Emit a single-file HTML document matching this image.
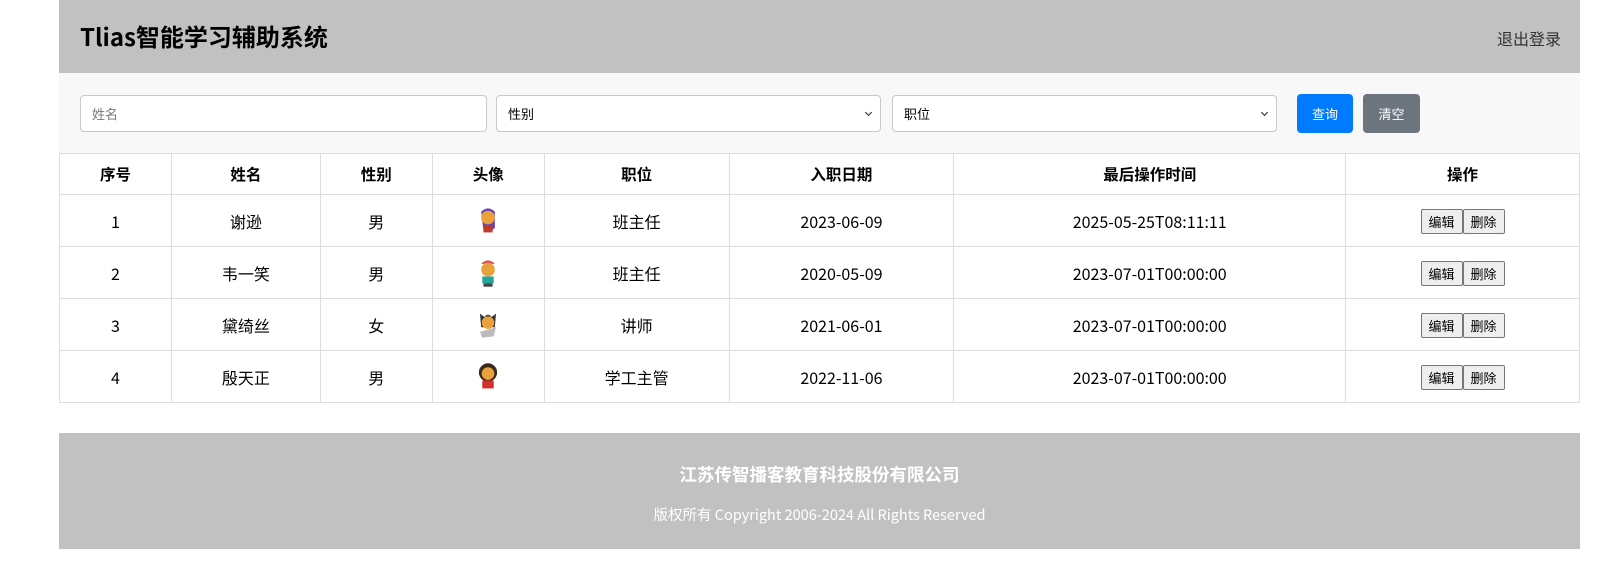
<!DOCTYPE html>
<html><head><meta charset="utf-8"><style>
*{margin:0;padding:0;box-sizing:border-box}
body{width:1620px;height:570px;background:#fff;font-family:"Liberation Sans","Noto Sans CJK SC",sans-serif;color:#000;position:relative;overflow:hidden}
.hdr{position:absolute;left:59px;top:0;width:1521px;height:73px;background:#c2c1c2}
.hdr h1{position:absolute;left:21px;top:20px;font-size:24px;font-weight:bold;font-family:"Noto Sans CJK SC",sans-serif;line-height:32px}
.hdr .out{position:absolute;right:19px;top:26px;font-size:16px;color:#333;font-family:"Noto Sans CJK SC",sans-serif;line-height:24px}
.srch{position:absolute;left:59px;top:73px;width:1521px;height:80px;background:#f8f8f8}
.inp{position:absolute;top:22px;height:37px;background:#fff;border:1px solid #c8c8c8;border-radius:4px;font-size:13px;font-family:"Noto Sans CJK SC",sans-serif;line-height:35px;padding-left:11px}
.inp.ph{color:#777}
.inp .arr{position:absolute;right:9px;top:14px;width:5px;height:5px;border-right:1.5px solid #222;border-bottom:1.5px solid #222;transform:rotate(45deg)}
.btn{position:absolute;top:21px;height:39px;border-radius:4px;color:#fff;font-size:13px;font-family:"Noto Sans CJK SC",sans-serif;text-align:center;line-height:39px}
table{position:absolute;left:59px;top:153px;width:1521px;border-collapse:collapse;font-family:"Noto Sans CJK SC",sans-serif;font-size:16px}
td,th{border:1px solid #ddd;text-align:center;height:52px}
th{height:41px;font-weight:bold;font-size:15.5px}
.ob{display:inline-block;height:25px;width:42px;border:1px solid #777;border-radius:2px;background:#eee;font-size:13px;line-height:23px;vertical-align:middle}
.ft{position:absolute;left:59px;top:433px;width:1521px;height:116px;background:#c2c1c2;color:#fff;text-align:center;font-family:"Noto Sans CJK SC",sans-serif}
.ft .c{position:absolute;top:30px;width:100%;font-size:17.5px;font-weight:bold;line-height:24px}
.ft .r{position:absolute;top:71px;width:100%;font-size:14.5px;line-height:22px}
svg{vertical-align:middle}
</style></head><body>
<div class="hdr"><h1>Tlias智能学习辅助系统</h1><div class="out">退出登录</div></div>
<div class="srch">
<div class="inp ph" style="left:21px;width:407px">姓名</div>
<div class="inp" style="left:437px;width:385px">性别<span class="arr"></span></div>
<div class="inp" style="left:833px;width:385px">职位<span class="arr"></span></div>
<div class="btn" style="left:1238px;width:56px;background:#007bff">查询</div>
<div class="btn" style="left:1304px;width:57px;background:#6c757d">清空</div>
</div>
<table>
<colgroup><col style="width:112px"><col style="width:149px"><col style="width:112px"><col style="width:112px"><col style="width:185px"><col style="width:225px"><col style="width:392px"><col style="width:234px"></colgroup>
<tr><th>序号</th><th>姓名</th><th>性别</th><th>头像</th><th>职位</th><th>入职日期</th><th>最后操作时间</th><th>操作</th></tr>
<tr><td>1</td><td>谢逊</td><td>男</td><td><svg width="28" height="32" viewBox="0 0 24 28"><path d="M6 6 Q12 0 18 6 L18 20 Q12 26 8 22 Z" fill="#6a3fb5"/><circle cx="12" cy="11" r="6" fill="#e9a23b"/><path d="M8 18 h8 v6 h-8z" fill="#c0392b"/></svg></td><td>班主任</td><td>2023-06-09</td><td>2025-05-25T08:11:11</td><td><span class="ob">编辑</span><span class="ob">删除</span></td></tr>
<tr><td>2</td><td>韦一笑</td><td>男</td><td><svg width="28" height="32" viewBox="0 0 24 28"><path d="M6 6 Q12 0 18 6z" fill="#d9534f"/><circle cx="12" cy="11" r="6" fill="#e9a23b"/><path d="M7 17 h10 v6 h-10z" fill="#26a69a"/><path d="M8 23 h8 v3 h-8z" fill="#444"/></svg></td><td>班主任</td><td>2020-05-09</td><td>2023-07-01T00:00:00</td><td><span class="ob">编辑</span><span class="ob">删除</span></td></tr>
<tr><td>3</td><td>黛绮丝</td><td>女</td><td><svg width="28" height="32" viewBox="0 0 24 28"><path d="M5 4 L9 7 Q12 3 15 7 L19 4 L18 16 L6 16Z" fill="#333"/><circle cx="12" cy="12" r="5.5" fill="#e9a23b"/><path d="M5 20 L19 16 L17 24 L7 25Z" fill="#bbb"/></svg></td><td>讲师</td><td>2021-06-01</td><td>2023-07-01T00:00:00</td><td><span class="ob">编辑</span><span class="ob">删除</span></td></tr>
<tr><td>4</td><td>殷天正</td><td>男</td><td><svg width="28" height="32" viewBox="0 0 24 28"><circle cx="12" cy="10" r="8" fill="#3a2a1a"/><circle cx="12" cy="11" r="5.5" fill="#e9a23b"/><path d="M7 17 h10 v7 h-10z" fill="#d32f2f"/></svg></td><td>学工主管</td><td>2022-11-06</td><td>2023-07-01T00:00:00</td><td><span class="ob">编辑</span><span class="ob">删除</span></td></tr>
</table>
<div class="ft"><div class="c">江苏传智播客教育科技股份有限公司</div><div class="r">版权所有 Copyright 2006-2024 All Rights Reserved</div></div>
</body></html>
